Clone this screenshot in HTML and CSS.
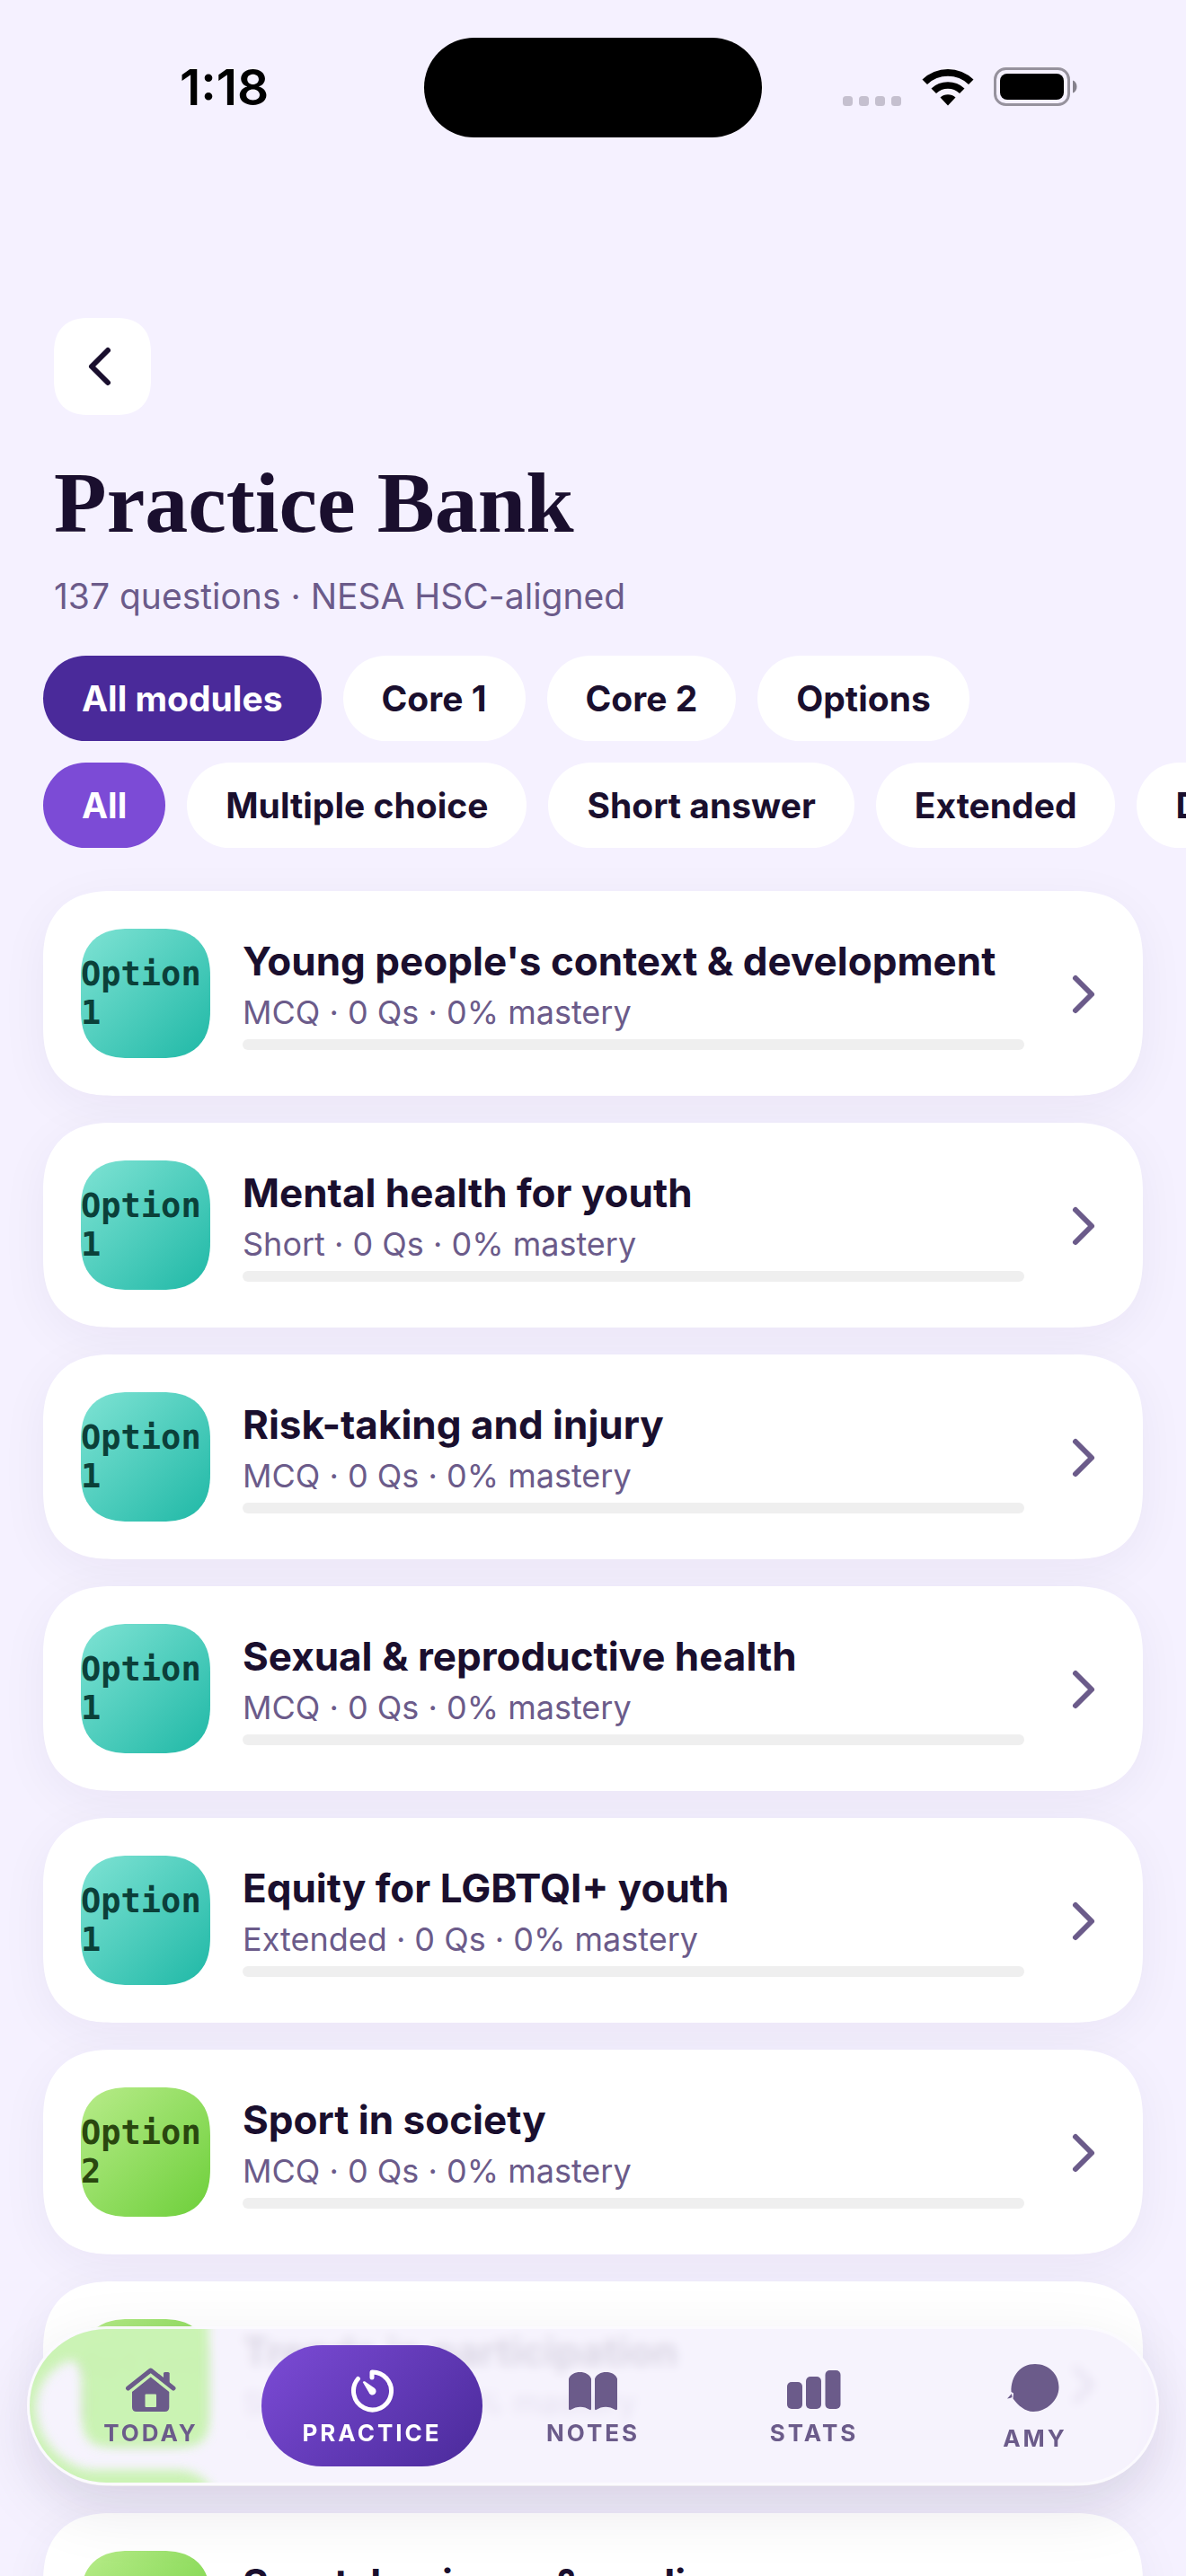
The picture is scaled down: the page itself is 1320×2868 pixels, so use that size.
FILE: index.html
```html
<!DOCTYPE html>
<html lang="en">
<head>
  <meta charset="UTF-8" />
  <meta name="viewport" content="width=device-width, initial-scale=1" />
  <title>Practice Bank</title>
  <link rel="stylesheet" href="styles.css">
</head>
<body>
  <div class="app">
    <div class="status-bar">
      <span class="time">1:18</span>
      <span class="island"></span>
      <div class="status-icons">
        <svg width="66" height="44" viewBox="0 0 66 44" fill="#c5c0cf">
          <rect x="0" y="32" width="11" height="11" rx="3.5" />
          <rect x="18" y="32" width="11" height="11" rx="3.5" />
          <rect x="36" y="32" width="11" height="11" rx="3.5" />
          <rect x="54" y="32" width="11" height="11" rx="3.5" />
        </svg>
        <svg width="58" height="44" viewBox="0 0 58 44">
          <path d="M0.5 13.5A41 41 0 0 1 57.5 13.5L52 19A33 33 0 0 0 6 19Z" />
          <path d="M10.5 23.5A27 27 0 0 1 47.5 23.5L42 29A19 19 0 0 0 16 29Z" />
          <path d="M20.5 33.5A13 13 0 0 1 37.5 33.5L29 42.5Z" />
        </svg>
        <svg width="94" height="44" viewBox="0 0 94 44">
          <rect x="1.5" y="1.5" width="82" height="40" rx="12" fill="none" stroke="#96929d" stroke-width="3" />
          <rect x="7" y="7" width="71" height="29" rx="8" />
          <path d="M88 14.5C94 16.500 94 26.500 88 28.500Z" fill="#85818c" />
        </svg>
      </div>
    </div>

    <header class="header">
      <button class="back" aria-label="Back">
        <svg width="36" height="48" viewBox="0 0 36 48"><path d="M27 6L9 24L27 42" /></svg>
      </button>
      <h1>Practice Bank</h1>
      <p>137 questions · NESA HSC-aligned</p>
    </header>

    <div class="chips">
      <button class="chip module-on">All modules</button>
      <button class="chip">Core 1</button>
      <button class="chip">Core 2</button>
      <button class="chip">Options</button>
    </div>
    <div class="chips">
      <button class="chip type-on">All</button>
      <button class="chip">Multiple choice</button>
      <button class="chip">Short answer</button>
      <button class="chip">Extended</button>
      <button class="chip">Data</button>
    </div>

    <main class="list">
      <a class="card" href="#">
        <span class="tile teal">Option 1</span>
        <span class="info">
          <strong>Young people's context &amp; development</strong>
          <small>MCQ · 0 Qs · 0% mastery</small>
          <progress value="0" max="100" aria-label="Mastery"></progress>
        </span>
        <svg class="chevron" width="54" height="54" viewBox="0 0 54 54"><path d="M21 10L39 28L21 46" /></svg>
      </a>
      <a class="card" href="#">
        <span class="tile teal">Option 1</span>
        <span class="info">
          <strong>Mental health for youth</strong>
          <small>Short · 0 Qs · 0% mastery</small>
          <progress value="0" max="100" aria-label="Mastery"></progress>
        </span>
        <svg class="chevron" width="54" height="54" viewBox="0 0 54 54"><path d="M21 10L39 28L21 46" /></svg>
      </a>
      <a class="card" href="#">
        <span class="tile teal">Option 1</span>
        <span class="info">
          <strong>Risk-taking and injury</strong>
          <small>MCQ · 0 Qs · 0% mastery</small>
          <progress value="0" max="100" aria-label="Mastery"></progress>
        </span>
        <svg class="chevron" width="54" height="54" viewBox="0 0 54 54"><path d="M21 10L39 28L21 46" /></svg>
      </a>
      <a class="card" href="#">
        <span class="tile teal">Option 1</span>
        <span class="info">
          <strong>Sexual &amp; reproductive health</strong>
          <small>MCQ · 0 Qs · 0% mastery</small>
          <progress value="0" max="100" aria-label="Mastery"></progress>
        </span>
        <svg class="chevron" width="54" height="54" viewBox="0 0 54 54"><path d="M21 10L39 28L21 46" /></svg>
      </a>
      <a class="card" href="#">
        <span class="tile teal">Option 1</span>
        <span class="info">
          <strong>Equity for LGBTQI+ youth</strong>
          <small>Extended · 0 Qs · 0% mastery</small>
          <progress value="0" max="100" aria-label="Mastery"></progress>
        </span>
        <svg class="chevron" width="54" height="54" viewBox="0 0 54 54"><path d="M21 10L39 28L21 46" /></svg>
      </a>
      <a class="card" href="#">
        <span class="tile green">Option 2</span>
        <span class="info">
          <strong>Sport in society</strong>
          <small>MCQ · 0 Qs · 0% mastery</small>
          <progress value="0" max="100" aria-label="Mastery"></progress>
        </span>
        <svg class="chevron" width="54" height="54" viewBox="0 0 54 54"><path d="M21 10L39 28L21 46" /></svg>
      </a>
      <a class="card" href="#">
        <span class="tile green">Option 2</span>
        <span class="info">
          <strong>Trends in participation</strong>
          <small>Short · 0 Qs · 0% mastery</small>
          <progress value="0" max="100" aria-label="Mastery"></progress>
        </span>
        <svg class="chevron" width="54" height="54" viewBox="0 0 54 54"><path d="M21 10L39 28L21 46" /></svg>
      </a>
      <a class="card" href="#">
        <span class="tile green">Option 2</span>
        <span class="info">
          <strong>Sport, business &amp; media</strong>
          <small>MCQ · 0 Qs · 0% mastery</small>
          <progress value="0" max="100" aria-label="Mastery"></progress>
        </span>
        <svg class="chevron" width="54" height="54" viewBox="0 0 54 54"><path d="M21 10L39 28L21 46" /></svg>
      </a>
    </main>

    <nav class="tabs">
      <!-- light bending through the glass at the left end -->
      <svg class="glow" width="240" height="177" viewBox="0 0 240 177">
        <defs>
          <filter id="soft" x="-20%" y="-20%" width="140%" height="140%"><feGaussianBlur stdDeviation="6" /></filter>
        </defs>
        <g filter="url(#soft)">
          <path d="M-20 -20H202V108Q202 134 174 134H90Q62 134 62 104V58Q60 38 46 38C20 50 10 72 10 92C12 126 40 156 70 160H170Q192 162 204 178V200H-20Z" fill="#c8f3af" />
        </g>
      </svg>
      <a class="tab" href="#">
        <svg width="60" height="54" viewBox="0 0 60 54">
          <path d="M4.500 25L29.700 5L55 25" fill="none" stroke="currentColor" stroke-width="5" stroke-linecap="round" stroke-linejoin="round" />
          <path d="M44 16V8.500Q44 7 45.500 7H49Q50.700 7 50.700 8.500V21.500Z" />
          <path fill-rule="evenodd" d="M29.700 12.500L50.300 29V46Q50.300 51 45.300 51H14Q9 51 9 46V29ZM24.500 31.500Q23.500 31.500 23.500 32.500V45Q23.500 46 24.500 46H35Q36 46 36 45V32.500Q36 31.500 35 31.500Z" />
        </svg>
        <span>TODAY</span>
      </a>
      <a class="tab active" href="#">
        <svg width="60" height="54" viewBox="0 0 60 54">
          <path d="M30 13V7A21 21 0 1 1 14.400 14.500" fill="none" stroke="currentColor" stroke-width="5" stroke-linecap="round" stroke-linejoin="round" />
          <path d="M19.800 18.200Q20.400 16.800 22 17.300L32.800 24.800A4.200 4.200 0 1 1 26.300 29.200Z" />
        </svg>
        <span>PRACTICE</span>
      </a>
      <a class="tab" href="#">
        <svg width="60" height="54" viewBox="0 0 60 54">
          <path d="M3 14.500C6 4.500 25 4.500 28 14.500V48Q28 49.500 26.500 49C20 44.500 12 44.500 5 49Q3 49.500 3 48Z" />
          <path d="M32 14.500C35 4.500 54 4.500 57 14.500V48Q57 49.500 55 49C48 44.500 40 44.500 33.500 49Q32 49.500 32 48Z" />
        </svg>
        <span>NOTES</span>
      </a>
      <a class="tab" href="#">
        <svg width="60" height="54" viewBox="0 0 60 54">
          <rect x="0" y="18" width="17" height="30" rx="5" />
          <rect x="21" y="12" width="17" height="36" rx="5" />
          <rect x="42.500" y="5" width="17" height="43" rx="5" />
        </svg>
        <span>STATS</span>
      </a>
      <a class="tab" href="#">
        <svg width="66" height="66" viewBox="0 0 66 66">
          <path d="M33 4C48 4 59.500 15 59.500 30C59.500 44 46 57 31 57C22 57 14 50 8.500 42.500L9 36.500L6.500 35C6 17 17 4 33 4Z" />
          <path d="M2 42.500L7 37L7.500 41L5 42Z" />
        </svg>
        <span>AMY</span>
      </a>
    </nav>
  </div>
</body>
</html>
```
FILE: styles.css
```css
* {
  box-sizing: border-box;
}

body {
  margin: 0;
  font-family: Inter, "Liberation Sans", sans-serif;
  color: #1a0f2e;
  background: #f5f1ff;
}

a {
  color: inherit;
  text-decoration: none;
}

button {
  font-family: inherit;
  border: none;
  cursor: pointer;
}

.app {
  height: 100vh;
  overflow: hidden;
}

/* status bar */
.status-bar {
  display: grid;
  grid-template-columns: 1fr auto 1fr;
  align-items: center;
  height: 194px;
  padding: 0 120px;
  color: #000;
}

.time {
  padding-left: 80px;
  font-size: 55px;
  font-weight: 600;
}

.island {
  width: 376px;
  height: 111px;
  border-radius: 56px;
  background: #000;
}

.status-icons {
  display: flex;
  justify-content: flex-end;
  gap: 22px;
}

/* header */
.header {
  padding: 160px 60px 0;
}

.back {
  display: flex;
  align-items: center;
  justify-content: center;
  width: 108px;
  height: 108px;
  padding: 0 6px 0 0;
  border-radius: 40px;
  background: #fff;
}

.back path,
.chevron path {
  fill: none;
  stroke: #1a0f2e;
  stroke-width: 6;
  stroke-linecap: round;
  stroke-linejoin: round;
}

h1 {
  margin: 42px 0 0;
  font-family: "Liberation Serif", serif;
  font-size: 96px;
  line-height: 112px;
  font-weight: 700;
}

.header p {
  margin: 24px 0 0;
  font-size: 39px;
  line-height: 48px;
  color: #6b5b8a;
}

/* filters */
.chips {
  display: flex;
  gap: 24px;
  padding: 0 48px;
  margin-top: 24px;
  overflow: hidden;
}

.header + .chips {
  margin-top: 42px;
}

.chip {
  flex: none;
  height: 95px;
  padding: 0 43px;
  border-radius: 48px;
  font-size: 39px;
  font-weight: 700;
  color: #1a0f2e;
  background: #fff;
}

.chip.module-on {
  color: #fff;
  background: #4a2a9a;
}

.chip.type-on {
  color: #fff;
  background: #7c4bd6;
}

/* question sets */
.list {
  display: flex;
  flex-direction: column;
  gap: 30px;
  padding: 48px;
}

.card {
  display: flex;
  align-items: center;
  gap: 36px;
  padding: 42px;
  border-radius: 78px;
  background: #fff;
  box-shadow: 0 12px 54px rgba(40, 25, 80, 0.05);
}

.tile {
  display: flex;
  align-items: center;
  flex: none;
  width: 144px;
  height: 144px;
  border-radius: 54px;
  font-family: "DejaVu Sans Mono", monospace;
  font-size: 37px;
  line-height: 43px;
  font-weight: 700;
}

.tile.teal {
  color: #0b4039;
  background: linear-gradient(135deg, #7fe3d4, #1fb8a6);
}

.tile.green {
  color: #2a470f;
  background: linear-gradient(135deg, #b8ec8a, #6dcf3a);
}

.info {
  display: flex;
  flex-direction: column;
  flex: 1;
  min-width: 0;
}

.info strong {
  font-size: 44px;
  line-height: 54px;
  font-weight: 700;
}

.info small {
  margin-top: 8px;
  font-size: 36px;
  line-height: 44px;
  color: #6b5b8a;
}

progress {
  appearance: none;
  width: 100%;
  height: 12px;
  margin-top: 8px;
  border: none;
  border-radius: 6px;
  background: #efefef;
  overflow: hidden;
}

progress::-webkit-progress-bar {
  background: #efefef;
}

progress::-webkit-progress-value {
  background: #7c4bd6;
}

.chevron {
  flex: none;
}

.chevron path {
  stroke: #6b5b8a;
}

/* floating tab bar */
.tabs {
  position: fixed;
  left: 30px;
  right: 30px;
  bottom: 101px;
  display: flex;
  padding: 18px 12px;
  border: 3px solid rgba(255, 255, 255, 0.6);
  border-radius: 90px;
  background: rgba(245, 241, 253, 0.88);
  backdrop-filter: blur(6px);
  box-shadow: 0 24px 72px rgba(26, 15, 46, 0.1);
  overflow: hidden;
}

.glow {
  position: absolute;
  left: -3px;
  top: -3px;
  opacity: 0.92;
}

.tab {
  position: relative;
  display: flex;
  flex: 1;
  flex-direction: column;
  align-items: center;
  justify-content: center;
  gap: 6px;
  height: 135px;
  border-radius: 68px;
  font-size: 26px;
  line-height: 30px;
  font-weight: 700;
  letter-spacing: 3px;
  color: #6b5b8a;
}

.tab svg {
  fill: currentColor;
}

.tab.active {
  color: #fff;
  background: linear-gradient(135deg, #7c4bd6, #4a2a9a);
}

/* smoother iOS style corners where the browser has them */
@supports (corner-shape: squircle) {
  .back,
  .card,
  .tile {
    corner-shape: superellipse(1.3);
  }
}
```
